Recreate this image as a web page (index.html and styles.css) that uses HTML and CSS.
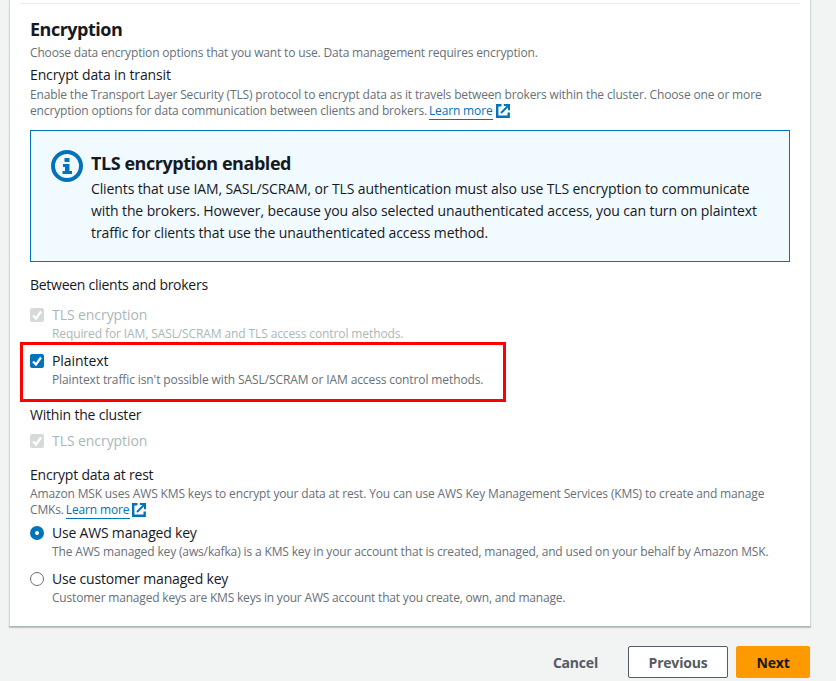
FILE: index.html
```html
<!DOCTYPE html>
<html lang="en">
<head>
    <meta charset="UTF-8">
    <meta name="viewport" content="width=device-width, initial-scale=1.0">
    <title>Encryption</title>
    <link rel="stylesheet" href="styles.css">
</head>
<body>
    <div class="card">
        <div class="card-rule"></div>
        <h2 class="card-title">Encryption</h2>
        <p class="hint">Choose data encryption options that you want to use. Data management requires encryption.</p>

        <h3 class="label label-transit">Encrypt data in transit</h3>
        <p class="hint hint-transit">Enable the Transport Layer Security (TLS) protocol to encrypt data as it travels between brokers within the cluster. Choose one or more encryption options for data communication between clients and brokers. <a class="learn" href="#">Learn more</a><svg class="ext-icon" viewBox="0 0 14 14"><path d="M5.500 1.300H1.200v11.500h11.500V8.500" fill="none" stroke="#0073bb" stroke-width="2.400"/><path d="M5 9 12 2M7.800 1h5.200v5.200" fill="none" stroke="#0073bb" stroke-width="2"/></svg></p>

        <div class="alert">
            <svg class="alert-icon" viewBox="0 0 32 32">
                <circle cx="16" cy="16" r="14" fill="none" stroke="#0073bb" stroke-width="4"/>
                <rect x="13.500" y="8" width="5" height="4" fill="#0073bb"/>
                <path d="M12 14h6.500v7H21v3H11.500v-3H14v-4h-2z" fill="#0073bb"/>
            </svg>
            <div>
                <div class="alert-title">TLS encryption enabled</div>
                <p class="alert-text">Clients that use IAM, SASL/SCRAM, or TLS authentication must also use TLS encryption to communicate with the brokers. However, because you also selected unauthenticated access, you can turn on plaintext traffic for clients that use the unauthenticated access method.</p>
            </div>
        </div>

        <h3 class="label label-between">Between clients and brokers</h3>
        <div class="option option-disabled option-first">
            <span class="check check-off"><svg viewBox="0 0 14 14"><path d="M3 7.500 6 10.500 11 3.500" fill="none" stroke="#fff" stroke-width="2.200"/></svg></span>
            <div>
                <div class="option-name">TLS encryption</div>
                <div class="option-sub option-sub-tight">Required for IAM, SASL/SCRAM and TLS access control methods.</div>
            </div>
        </div>
        <div class="option option-marked">
            <span class="check check-on"><svg viewBox="0 0 14 14"><path d="M3 7.500 6 10.500 11 3.500" fill="none" stroke="#fff" stroke-width="2.200"/></svg></span>
            <div>
                <div class="option-name">Plaintext</div>
                <div class="option-sub option-sub-tight">Plaintext traffic isn't possible with SASL/SCRAM or IAM access control methods.</div>
            </div>
            <div class="red-box"></div>
        </div>

        <h3 class="label label-within">Within the cluster</h3>
        <div class="option option-disabled option-within">
            <span class="check check-off"><svg viewBox="0 0 14 14"><path d="M3 7.500 6 10.500 11 3.500" fill="none" stroke="#fff" stroke-width="2.200"/></svg></span>
            <div class="option-name">TLS encryption</div>
        </div>

        <h3 class="label label-rest">Encrypt data at rest</h3>
        <p class="hint hint-rest">Amazon MSK uses AWS KMS keys to encrypt your data at rest. You can use AWS Key Management Services (KMS) to create and manage CMKs. <a class="learn" href="#">Learn more</a><svg class="ext-icon" viewBox="0 0 14 14"><path d="M5.500 1.300H1.200v11.500h11.500V8.500" fill="none" stroke="#0073bb" stroke-width="2.400"/><path d="M5 9 12 2M7.800 1h5.200v5.200" fill="none" stroke="#0073bb" stroke-width="2"/></svg></p>
        <div class="option option-radio-first">
            <span class="radio radio-on"></span>
            <div>
                <div class="option-name">Use AWS managed key</div>
                <div class="option-sub">The AWS managed key (aws/kafka) is a KMS key in your account that is created, managed, and used on your behalf by Amazon MSK.</div>
            </div>
        </div>
        <div class="option option-radio-second">
            <span class="radio"></span>
            <div>
                <div class="option-name">Use customer managed key</div>
                <div class="option-sub option-sub-narrow">Customer managed keys are KMS keys in your AWS account that you create, own, and manage.</div>
            </div>
        </div>
    </div>

    <div class="actions">
        <button class="btn-link">Cancel</button>
        <button class="btn btn-normal">Previous</button>
        <button class="btn btn-primary">Next</button>
    </div>
</body>
</html>
```

FILE: styles.css
```css
html, body {
    height: 100%;
}

body {
    margin: 0;
    background: #f2f3f3;
    color: #16191f;
    font-family: "Open Sans", "Noto Sans", sans-serif;
    font-size: 14px;
    overflow: hidden;
}

.card {
    box-sizing: border-box;
    width: 802px;
    height: 627px;
    margin-left: 9px;
    padding: 0 20px;
    background: #fff;
    border-right: 1px solid #d5dbdb;
    border-bottom: 1px solid #aab7b8;
    border-left: 1px solid #d5dbdb;
    box-shadow: 0 1px 1px rgba(0, 28, 36, 0.2);
}

.card-rule {
    height: 4px;
    border-bottom: 1px solid #eaeded;
    box-sizing: border-box;
    margin-right: -10px;
    margin-left: -10px;
}

.card-title {
    margin: 12px 0 0;
    font-size: 18px;
    line-height: 26px;
    font-weight: 700;
    letter-spacing: -0.5px;
}

.hint {
    margin: 0;
    color: #687078;
    font-size: 12px;
    line-height: 16px;
    letter-spacing: -0.165px;
}

.card-title + .hint {
    margin-top: 3px;
}

.label {
    margin: 0;
    font-size: 14px;
    line-height: 22px;
    font-weight: 400;
    letter-spacing: -0.2px;
}

.label-transit {
    margin-top: 3px;
    letter-spacing: -0.13px;
}

.label-between {
    margin-top: 12px;
    letter-spacing: -0.27px;
}

.hint-transit {
    margin-top: 1px;
    letter-spacing: -0.15px;
}

.learn {
    margin-left: -1px;
    color: #0073bb;
    text-decoration: none;
    border-bottom: 1px solid #0073bb;
    padding-right: 1px;
}

.ext-icon {
    width: 14px;
    height: 14px;
    margin-left: 2px;
    vertical-align: -3px;
}

.hint-transit .ext-icon {
    margin-left: 3px;
}

.alert {
    box-sizing: border-box;
    display: flex;
    gap: 8px;
    height: 132px;
    margin-top: 11px;
    padding: 20px;
    background: #f1faff;
    border: 1px solid #0073bb;
}

.alert-icon {
    flex: none;
    width: 32px;
    height: 32px;
    margin-top: -1px;
}

.alert-title {
    font-size: 18px;
    line-height: 24px;
    font-weight: 700;
    letter-spacing: -0.45px;
}

.alert-text {
    margin: 3px 0 0;
    font-size: 14px;
    line-height: 22px;
    letter-spacing: -0.115px;
}

.option {
    position: relative;
    display: flex;
    gap: 8px;
}

.option-name {
    line-height: 22px;
    letter-spacing: -0.07px;
}

.option-sub {
    color: #687078;
    font-size: 12px;
    line-height: 16px;
    letter-spacing: -0.145px;
}

.option-sub-tight {
    letter-spacing: -0.11px;
}

.option-sub-narrow {
    letter-spacing: -0.19px;
}

.option-disabled .option-name,
.option-disabled .option-sub {
    color: #aab7b8;
}

.option-first {
    margin-top: 8px;
}

.option-marked {
    margin-top: 8px;
}

.check {
    flex: none;
    box-sizing: border-box;
    width: 14px;
    height: 14px;
    margin-top: 4px;
    border-radius: 2px;
}

.check svg {
    display: block;
    width: 14px;
    height: 14px;
}

.check-on {
    background: #0073bb;
}

.check-off {
    background: #d5dbdb;
}

.red-box {
    position: absolute;
    top: -8px;
    left: -10px;
    width: 486px;
    height: 60px;
    box-sizing: border-box;
    border: 3px solid #ff0000;
    pointer-events: none;
}

.label-within {
    margin-top: 16px;
}

.option-within {
    margin-top: 4px;
}

.label-rest {
    margin-top: 12px;
}

.hint-rest {
    letter-spacing: -0.15px;
}

.option-radio-first {
    margin-top: 4px;
}

.option-radio-second {
    margin-top: 8px;
}

.option-radio-first .option-name,
.option-radio-second .option-name {
    letter-spacing: -0.2px;
}

.radio {
    flex: none;
    box-sizing: border-box;
    width: 14px;
    height: 14px;
    margin-top: 4px;
    border: 1px solid #687078;
    border-radius: 50%;
    background: #fff;
}

.radio-on {
    border: 5px solid #0073bb;
}

.actions {
    display: flex;
    align-items: center;
    justify-content: flex-end;
    width: 810px;
    margin-top: 19px;
}

button {
    font-family: inherit;
    font-size: 14px;
    font-weight: 700;
    letter-spacing: -0.2px;
}

.btn-link {
    padding: 0;
    margin-right: 30px;
    background: none;
    border: 0;
    color: #545b64;
}

.btn {
    box-sizing: border-box;
    height: 32px;
    border-radius: 2px;
}

.btn-normal {
    width: 100px;
    margin-right: 8px;
    background: #fff;
    border: 1px solid #545b64;
    color: #545b64;
}

.btn-primary {
    width: 74px;
    background: #ff9900;
    border: 1px solid #ff9900;
    color: #16191f;
}
```
